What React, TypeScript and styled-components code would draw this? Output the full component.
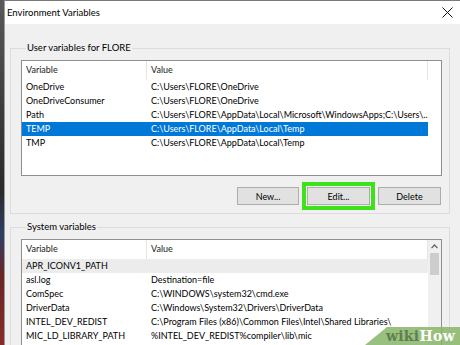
import * as React from 'react';
import styled, { createGlobalStyle } from 'styled-components';

const userVars = [
  { name: 'OneDrive', value: 'C:\\Users\\FLORE\\OneDrive' },
  { name: 'OneDriveConsumer', value: 'C:\\Users\\FLORE\\OneDrive' },
  { name: 'Path', value: 'C:\\Users\\FLORE\\AppData\\Local\\Microsoft\\WindowsApps;C:\\Users\\...' },
  { name: 'TEMP', value: 'C:\\Users\\FLORE\\AppData\\Local\\Temp', selected: true },
  { name: 'TMP', value: 'C:\\Users\\FLORE\\AppData\\Local\\Temp' },
];

const systemVars = [
  { name: 'APR_ICONV1_PATH', value: '', hover: true },
  { name: 'asl.log', value: 'Destination=file' },
  { name: 'ComSpec', value: 'C:\\WINDOWS\\system32\\cmd.exe' },
  { name: 'DriverData', value: 'C:\\Windows\\System32\\Drivers\\DriverData' },
  { name: 'INTEL_DEV_REDIST', value: 'C:\\Program Files (x86)\\Common Files\\Intel\\Shared Libraries\\' },
  { name: 'MIC_LD_LIBRARY_PATH', value: '%INTEL_DEV_REDIST%compiler\\lib\\mic' },
  { name: 'NUMBER_OF_PROCESSORS', value: '8' },
];

const GlobalStyle = createGlobalStyle`
  html, body {
    margin: 0;
    padding: 0;
    width: 460px;
    height: 345px;
    overflow: hidden;
    background: #3c3c3c;
  }
  body {
    font-family: Lato, 'Open Sans', sans-serif;
    font-size: 9px;
    color: #000;
  }
`;

interface Variable {
  name: string;
  value: string;
  selected?: boolean;
  hover?: boolean;
}

function VarList({ rows, scroll, height }: { rows: Variable[]; scroll?: boolean; height: number }) {
  return (
    <ListFrame $h={height}>
      <ListBody>
        <HeaderRow>
          <HeaderCell $w={125}>Variable</HeaderCell>
          <HeaderCell $w={281}>Value</HeaderCell>
        </HeaderRow>
        {rows.map((r) => (
          <Row key={r.name} $selected={r.selected} $hover={r.hover}>
            <Cell $w={125}>{r.name}</Cell>
            <Cell $w={281}>{r.value}</Cell>
          </Row>
        ))}
      </ListBody>
      {scroll && (
        <ScrollBar>
          <ScrollArrow>
            <svg width="7" height="5" viewBox="0 0 7 5">
              <path d="M0.5 4.2 L3.5 1 L6.5 4.2" fill="none" stroke="#606060" strokeWidth="1.2" />
            </svg>
          </ScrollArrow>
          <Thumb />
        </ScrollBar>
      )}
    </ListFrame>
  );
}

function App() {
  return (
    <>
      <GlobalStyle />
      <Screen>
        <DesktopStrip />
        <Window>
          <TitleBar>
            <Title>Environment Variables</Title>
            <CloseButton>
              <svg width="11" height="11" viewBox="0 0 11 11">
                <path d="M0.5 0.5 L10.5 10.5 M10.5 0.5 L0.5 10.5" stroke="#111" strokeWidth="1" />
              </svg>
            </CloseButton>
          </TitleBar>
          <Body>
            <Group>
              <Legend>User variables for FLORE</Legend>
              <VarList rows={userVars} height={114} />
              <ButtonRow>
                <Button $w={62}>New...</Button>
                <Button $w={63} $focus>Edit...</Button>
                <Button $w={63}>Delete</Button>
              </ButtonRow>
            </Group>
            <Group $grow>
              <Legend>System variables</Legend>
              <VarList rows={systemVars} height={200} scroll />
            </Group>
          </Body>
        </Window>
        <Watermark>
          <Wiki>wiki</Wiki>
          <How>How</How>
        </Watermark>
      </Screen>
    </>
  );
}

const Screen = styled.div`
  position: relative;
  display: flex;
  width: 460px;
  height: 345px;
  overflow: hidden;
`;

const DesktopStrip = styled.div`
  width: 4px;
  flex-shrink: 0;
  background: linear-gradient(
    to bottom,
    #5a5a5a 0%,
    #3e3e3e 30%,
    #2a2a2a 55%,
    #2d3f66 68%,
    #6b2424 80%,
    #8a2b2b 100%
  );
`;

const Window = styled.div`
  flex: 1;
  display: flex;
  flex-direction: column;
  background: #f0f0f0;
  border-top: 1px solid #7a7a7a;
  border-left: 1px solid #9a9a9a;
`;

const TitleBar = styled.div`
  height: 23px;
  display: flex;
  align-items: center;
  justify-content: space-between;
  background: #fff;
  padding-left: 2px;
`;

const Title = styled.span`
  font-size: 9.5px;
`;

const CloseButton = styled.div`
  width: 24px;
  height: 23px;
  display: flex;
  align-items: center;
  justify-content: center;
  margin-right: 1px;
`;

const Body = styled.div`
  flex: 1;
  display: flex;
  flex-direction: column;
  gap: 6px;
  padding: 17px 10px 0 5px;
`;

const Group = styled.fieldset<{ $grow?: boolean }>`
  margin: 0;
  padding: 5px 7px 8px 10px;
  border: 1px solid #dcdcdc;
  min-width: 0;
  flex: ${(p) => (p.$grow ? 1 : 'none')};
  display: flex;
  flex-direction: column;
`;

const Legend = styled.legend`
  margin-left: 5px;
  padding: 0 1px;
  line-height: 14px;
  font-size: 9.5px;
`;

const ListFrame = styled.div<{ $h: number }>`
  display: flex;
  border: 1px solid #8f8f8f;
  background: #fff;
  height: ${(p) => p.$h}px;
  flex-shrink: 0;
`;

const ListBody = styled.div`
  flex: 1;
  display: flex;
  flex-direction: column;
  min-width: 0;
  overflow: hidden;
`;

const HeaderRow = styled.div`
  display: flex;
  height: 19px;
  flex-shrink: 0;
`;

const HeaderCell = styled.div<{ $w: number }>`
  width: ${(p) => p.$w}px;
  box-sizing: border-box;
  padding-left: 4px;
  line-height: 18px;
  border-right: 1px solid #e5e5e5;
  flex-shrink: 0;
  color: #1a1a1a;
`;

const Row = styled.div<{ $selected?: boolean; $hover?: boolean }>`
  display: flex;
  width: 406px;
  height: 14px;
  flex-shrink: 0;
  line-height: 14px;
  background: ${(p) => (p.$selected ? '#0078d7' : p.$hover ? '#ececec' : 'transparent')};
  color: ${(p) => (p.$selected ? '#fff' : '#000')};
`;

const Cell = styled.div<{ $w: number }>`
  width: ${(p) => p.$w}px;
  box-sizing: border-box;
  padding-left: 4px;
  flex-shrink: 0;
  white-space: nowrap;
  overflow: hidden;
`;

const ScrollBar = styled.div`
  width: 13px;
  flex-shrink: 0;
  display: flex;
  flex-direction: column;
  align-items: center;
  background: #f0f0f0;
`;

const ScrollArrow = styled.div`
  height: 13px;
  display: flex;
  align-items: center;
  justify-content: center;
`;

const Thumb = styled.div`
  width: 9px;
  height: 22px;
  background: #cdcdcd;
`;

const ButtonRow = styled.div`
  display: flex;
  justify-content: flex-end;
  gap: 8px;
  margin-top: 11px;
  padding-right: 1px;
`;

const Button = styled.div<{ $w: number; $focus?: boolean }>`
  width: ${(p) => p.$w}px;
  height: 18px;
  box-sizing: border-box;
  display: flex;
  align-items: center;
  justify-content: center;
  background: #e1e1e1;
  border: 1px solid #adadad;
  outline: ${(p) => (p.$focus ? '4px solid #3de21b' : 'none')};
  outline-offset: 1px;
`;

const Watermark = styled.div`
  position: absolute;
  right: 0;
  bottom: 0;
  width: 90px;
  height: 18px;
  display: flex;
  align-items: center;
  justify-content: flex-end;
  padding-right: 5px;
  background: rgba(130, 178, 98, 0.82);
  clip-path: polygon(22px 0, 100% 0, 100% 100%, 0 100%);
  font-family: 'DejaVu Serif', 'Liberation Serif', serif;
  font-weight: bold;
  font-size: 14px;
  letter-spacing: 0.3px;
`;

const Wiki = styled.span`
  color: #5f7f50;
`;

const How = styled.span`
  color: #ffffff;
`;

export default App;
